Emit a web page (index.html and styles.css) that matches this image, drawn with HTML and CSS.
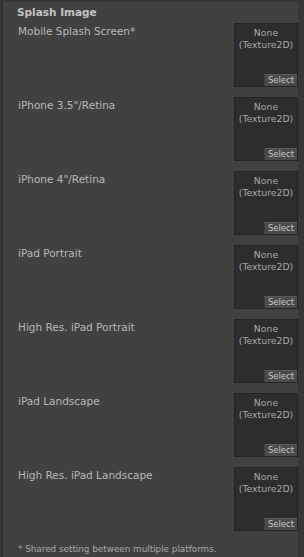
FILE: index.html
```html
<!DOCTYPE html>
<html lang="en">
<head>
  <meta charset="UTF-8">
  <title>Splash Image</title>
  <link rel="stylesheet" href="styles.css">
</head>
<body>
  <div class="panel">
    <h2 class="title">Splash Image</h2>

    <div class="row">
      <span class="label">Mobile Splash Screen*</span>
      <div class="texture">
        <span class="none">None<br>(Texture2D)</span>
        <button class="select">Select</button>
      </div>
    </div>

    <div class="row">
      <span class="label">iPhone 3.5"/Retina</span>
      <div class="texture">
        <span class="none">None<br>(Texture2D)</span>
        <button class="select">Select</button>
      </div>
    </div>

    <div class="row">
      <span class="label">iPhone 4"/Retina</span>
      <div class="texture">
        <span class="none">None<br>(Texture2D)</span>
        <button class="select">Select</button>
      </div>
    </div>

    <div class="row">
      <span class="label">iPad Portrait</span>
      <div class="texture">
        <span class="none">None<br>(Texture2D)</span>
        <button class="select">Select</button>
      </div>
    </div>

    <div class="row">
      <span class="label">High Res. iPad Portrait</span>
      <div class="texture">
        <span class="none">None<br>(Texture2D)</span>
        <button class="select">Select</button>
      </div>
    </div>

    <div class="row">
      <span class="label">iPad Landscape</span>
      <div class="texture">
        <span class="none">None<br>(Texture2D)</span>
        <button class="select">Select</button>
      </div>
    </div>

    <div class="row">
      <span class="label">High Res. iPad Landscape</span>
      <div class="texture">
        <span class="none">None<br>(Texture2D)</span>
        <button class="select">Select</button>
      </div>
    </div>

    <p class="note">* Shared setting between multiple platforms.</p>
  </div>
</body>
</html>
```

FILE: styles.css
```css
body {
  margin: 0;
  background-color: #363636;
  font-family: "DejaVu Sans", Verdana, sans-serif;
  color: #b8b8b8;
  height: 557px;
  overflow: hidden;
}

.panel {
  margin: 2px 6px 0 2px;
  height: 555px;
  background-color: #414141;
  border-left: 1px solid #2c2c2c;
  box-sizing: border-box;
  padding: 4px 0 0 14px;
}

.title {
  margin: 0;
  font-size: 10.5px;
  font-weight: bold;
  color: #c2c2c2;
  line-height: 13px;
}

.row {
  display: flex;
  justify-content: space-between;
  height: 74px;
}

.row:first-of-type {
  margin-top: 4px;
}

.label {
  font-size: 10.5px;
  line-height: 13px;
  padding-left: 1px;
  padding-top: 2px;
}

.texture {
  position: relative;
  width: 62px;
  height: 62px;
  background-color: #2d2d2d;
  border: 1px solid #222;
  text-align: center;
}

.none {
  display: block;
  margin-top: 3px;
  font-size: 9.3px;
  line-height: 12px;
  color: #a8a8a8;
}

.select {
  position: absolute;
  right: 0;
  bottom: 0;
  width: 33px;
  height: 12px;
  padding: 0;
  border: none;
  border-top: 1px solid #5a5a5a;
  border-left: 1px solid #3c3c3c;
  background-color: #4b4b4b;
  color: #c4c4c4;
  font-family: "DejaVu Sans", Verdana, sans-serif;
  font-size: 8.5px;
  line-height: 11px;
  text-align: center;
}

.note {
  margin: 3px 0 0;
  padding-left: 1px;
  font-size: 8.8px;
  line-height: 11px;
  color: #a8a8a8;
}
```
